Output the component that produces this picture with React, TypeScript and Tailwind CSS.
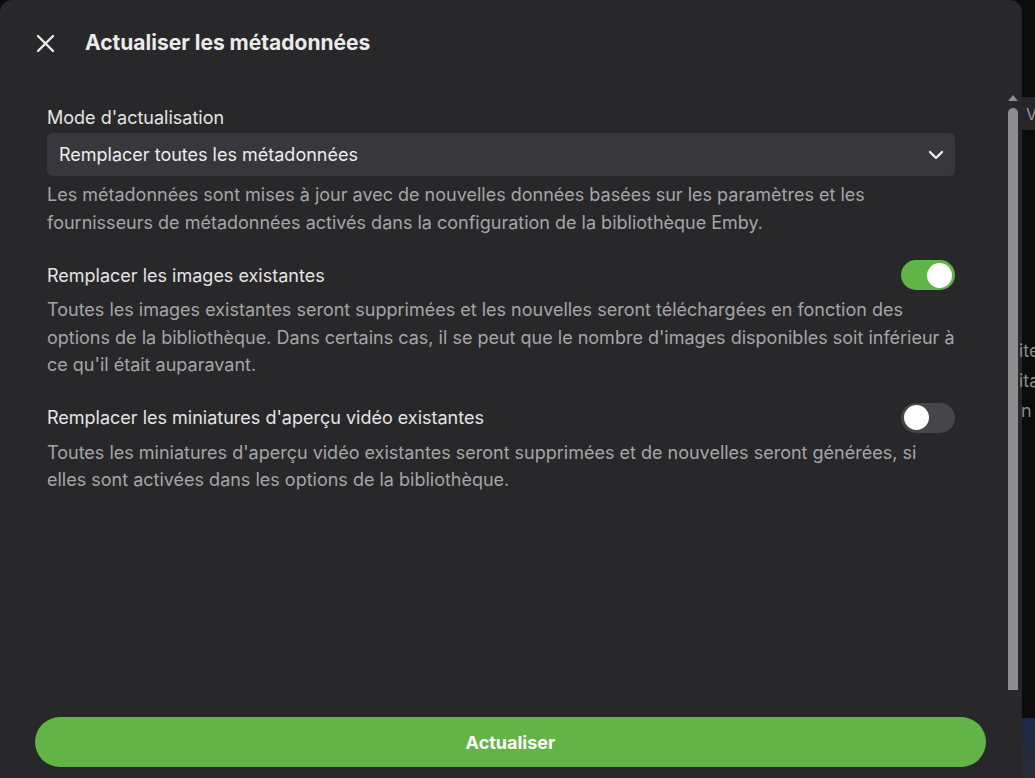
import { useState } from "react"

const font = { fontFamily: "Inter, 'Noto Sans', sans-serif" }

const CloseIcon = () => (
  <svg width="19" height="19" viewBox="0 0 19 19" fill="none" stroke="#ececec" strokeWidth="2.4" strokeLinecap="round">
    <path d="M2 2 L17 17 M17 2 L2 17" />
  </svg>
)

const Chevron = () => (
  <svg width="16" height="10" viewBox="0 0 16 10" fill="none" stroke="#f2f2f2" strokeWidth="2.4" strokeLinecap="round" strokeLinejoin="round">
    <path d="M2 2 L8 8 L14 2" />
  </svg>
)

const Toggle = ({ on, onClick }: { on: boolean; onClick: () => void }) => (
  <button
    onClick={onClick}
    className={
      "flex h-[30px] w-[54px] shrink-0 items-center rounded-full px-[3px] " +
      (on ? "justify-end bg-[#5fb547]" : "justify-start bg-[#46464a]")
    }
  >
    <span className="h-[25px] w-[25px] rounded-full bg-white" />
  </button>
)

const Desc = ({ children }: { children: React.ReactNode }) => (
  <p className="text-[18px] leading-[27.5px] text-[#a5a5a7]">{children}</p>
)

export default function App() {
  const [images, setImages] = useState(true)
  const [thumbs, setThumbs] = useState(false)

  return (
    <div style={font} className="flex h-[778px] w-full overflow-hidden bg-[#0b0b0b]">
      <div className="flex w-[1022px] shrink-0 flex-col rounded-t-[12px] bg-[#28282a]">
        <div className="flex h-[95px] items-center gap-[30px] pb-[9px] pl-[36px]">
          <CloseIcon />
          <h1 className="text-[21px] font-bold text-[#ebebeb]">Actualiser les métadonnées</h1>
        </div>

        <div className="flex min-h-0 flex-1">
          <div className="flex flex-1 flex-col gap-[24px] pl-[47px] pr-[53px] pt-[11px]">
            <div className="flex flex-col">
              <label className="text-[18px] leading-[24px] text-[#e4e4e4]">Mode d'actualisation</label>
              <div className="mt-[3px] flex h-[43px] items-center justify-between rounded-[6px] bg-[#38383c] pl-[12px] pr-[11px]">
                <span className="text-[18px] text-[#ededed]">Remplacer toutes les métadonnées</span>
                <Chevron />
              </div>
              <div className="mt-[5px]">
                <Desc>
                  Les métadonnées sont mises à jour avec de nouvelles données basées sur les paramètres et les
                  fournisseurs de métadonnées activés dans la configuration de la bibliothèque Emby.
                </Desc>
              </div>
            </div>

            <div className="flex flex-col gap-[6px]">
              <div className="flex items-center justify-between">
                <span className="text-[18px] text-[#e4e4e4]">Remplacer les images existantes</span>
                <Toggle on={images} onClick={() => setImages(!images)} />
              </div>
              <Desc>
                Toutes les images existantes seront supprimées et les nouvelles seront téléchargées en fonction des
                options de la bibliothèque. Dans certains cas, il se peut que le nombre d'images disponibles soit
                inférieur à ce qu'il était auparavant.
              </Desc>
            </div>

            <div className="flex flex-col gap-[6px]">
              <div className="flex items-center justify-between">
                <span className="text-[18px] text-[#e4e4e4]">Remplacer les miniatures d'aperçu vidéo existantes</span>
                <Toggle on={thumbs} onClick={() => setThumbs(!thumbs)} />
              </div>
              <Desc>
                Toutes les miniatures d'aperçu vidéo existantes seront supprimées et de nouvelles seront générées, si
                elles sont activées dans les options de la bibliothèque.
              </Desc>
            </div>
          </div>

          <div className="mr-[4px] flex w-[10px] flex-col items-center">
            <div className="h-0 w-0 border-x-[5px] border-b-[6px] border-x-transparent border-b-[#8e8e90]" />
            <div className="mb-[2px] mt-[7px] w-[10px] flex-1 rounded-t-full bg-[#8e8e90]" />
          </div>
        </div>

        <div className="px-[35px] pb-[11px] pt-[25px]">
          <button className="flex h-[50px] w-[951px] items-center justify-center rounded-full bg-[#62b446] text-[18px] font-bold text-white">
            Actualiser
          </button>
        </div>
      </div>

      <div className="flex min-w-0 flex-1 flex-col pt-[97px]">
        <div className="flex h-[33px] items-center bg-[#262627] pl-[4px] text-[16px] text-[#9a9a9a]">V</div>
        <div className="mt-[209px] flex flex-col gap-[6px] whitespace-nowrap text-[18px] leading-[24px] text-[#8a8a8a]">
          <span className="-ml-[3px]">ite</span>
          <span className="-ml-[3px]">ita</span>
          <span className="-ml-[1px]">n</span>
        </div>
        <div className="mt-auto h-[60px] bg-gradient-to-b from-[#1b2a4a] to-[#2a2a33]" />
      </div>
    </div>
  )
}
